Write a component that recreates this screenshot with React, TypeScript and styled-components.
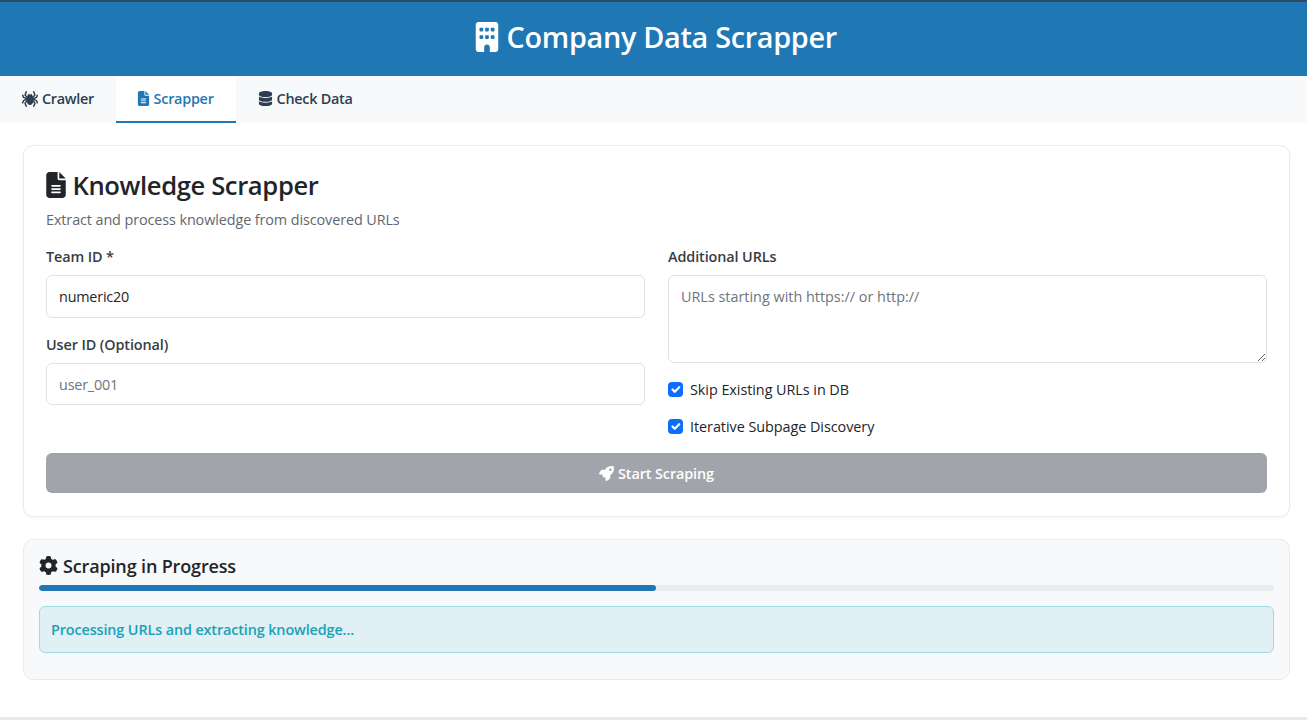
import styled, { createGlobalStyle } from "styled-components";
import { FaBuilding, FaDatabase, FaFileLines, FaGear, FaRocket, FaSpider } from "react-icons/fa6";

const GlobalStyle = createGlobalStyle`
     html, body {
          margin: 0;
          padding: 0;
          background: #fff;
     }
     body {
          font-family: "Open Sans", "Noto Sans", sans-serif;
          color: #212529;
          font-size: 14.4px;
     }
     * {
          box-sizing: border-box;
     }
`;

const Page = styled.div`
     height: 720px;
     overflow: hidden;
     display: flex;
     flex-direction: column;
`;
// fa6 glyphs sit in a square box, $inset trims the empty sides so gaps start at the drawing
const Glyph = styled.span<{ $size: number; $inset?: number }>`
     display: inline-flex;
     flex: none;
     margin: 0 ${(p) => -(p.$inset ?? 0)}px;
     svg {
          width: ${(p) => p.$size}px;
          height: ${(p) => p.$size}px;
     }
`;
const Header = styled.header`
     height: 76px;
     flex: none;
     padding: 0 0 5px 6px;
     background: #1f77b4;
     border-top: 2px solid #31495c;
     display: flex;
     align-items: center;
     justify-content: center;
     gap: 8px;
     color: #fff;
`;
const HeaderTitle = styled.h1`
     margin: 0;
     font-size: 28.8px;
     font-weight: 600;
     letter-spacing: -0.3px;
`;
const TabBar = styled.nav`
     height: 47px;
     flex: none;
     display: flex;
     background: #f8f9fa;
`;
const Tab = styled.div<{ $active?: boolean; $width: number }>`
     width: ${(p) => p.$width}px;
     display: flex;
     align-items: center;
     justify-content: center;
     gap: 4px;
     font-size: 14.4px;
     font-weight: 600;
     letter-spacing: -0.25px;
     color: ${(p) => (p.$active ? "#1f77b4" : "#2c3e50")};
     background: ${(p) => (p.$active ? "#fff" : "transparent")};
     border-bottom: 2px solid ${(p) => (p.$active ? "#1f77b4" : "transparent")};
`;
const Content = styled.main`
     flex: 1;
     padding: 22px 17px 0 23px;
     display: flex;
     flex-direction: column;
     gap: 22px;
`;
const Card = styled.section`
     height: 372px;
     flex: none;
     padding: 22px 22px 0;
     background: #fff;
     border: 1px solid #e9ecef;
     border-radius: 10px;
     box-shadow: 0 1px 3px rgba(0, 0, 0, 0.05);
`;
const CardTitle = styled.h2`
     margin: 0;
     height: 34px;
     display: flex;
     align-items: center;
     gap: 7px;
     font-size: 25.6px;
     font-weight: 600;
     letter-spacing: -0.38px;
     color: #212529;
`;
const CardSubtitle = styled.p`
     margin: 8px 0 0;
     height: 20px;
     line-height: 20px;
     font-size: 14.4px;
     color: #5f6770;
     letter-spacing: -0.1px;
`;
const FormGrid = styled.div`
     margin-top: 17px;
     display: grid;
     grid-template-columns: 1fr 1fr;
     column-gap: 23px;
`;
const Column = styled.div`
     display: flex;
     flex-direction: column;
`;
const Label = styled.label`
     height: 20px;
     line-height: 20px;
     margin-bottom: 8px;
     font-size: 14.4px;
     font-weight: 600;
     color: #373d43;
     letter-spacing: -0.1px;
`;
const Input = styled.input<{ $height: number; $spaced?: boolean }>`
     height: ${(p) => p.$height}px;
     padding: 0 12px;
     margin-bottom: ${(p) => (p.$spaced ? "17px" : "0")};
     font: inherit;
     letter-spacing: -0.2px;
     color: #212529;
     background: #fff;
     border: 1px solid #dee2e6;
     border-radius: 6px;
     outline: none;
     &::placeholder {
          color: #6c757d;
          opacity: 1;
     }
`;
const TextArea = styled.textarea`
     height: 88px;
     padding: 11px 12px;
     font: inherit;
     background: #fff;
     border: 1px solid #dee2e6;
     border-radius: 6px;
     outline: none;
     resize: vertical;
     &::placeholder {
          color: #6c757d;
          opacity: 1;
     }
`;
const CheckRow = styled.label<{ $top: number }>`
     margin-top: ${(p) => p.$top}px;
     height: 20px;
     display: flex;
     align-items: center;
     gap: 7px;
     font-size: 14.4px;
     color: #212529;
     letter-spacing: -0.05px;
`;
const CheckBox = styled.input`
     width: 15px;
     height: 15px;
     margin: 0;
     appearance: none;
     border-radius: 4px;
     background-color: #0d6efd;
     background-image: url("data:image/svg+xml,%3csvg xmlns='http://www.w3.org/2000/svg' viewBox='0 0 20 20'%3e%3cpath fill='none' stroke='%23fff' stroke-linecap='round' stroke-linejoin='round' stroke-width='3' d='m6 10 3 3 6-6'/%3e%3c/svg%3e");
     background-size: 100% 100%;
`;
const SubmitButton = styled.button`
     margin-top: 17px;
     width: 100%;
     height: 40px;
     display: flex;
     align-items: center;
     justify-content: center;
     gap: 4px;
     border: none;
     border-radius: 6px;
     background: #a1a5ab;
     color: #fff;
     font: inherit;
     font-weight: 600;
     letter-spacing: -0.1px;
`;
const ProgressCard = styled.section`
     height: 141px;
     flex: none;
     padding: 13px 15px 0;
     background: #f8f9fa;
     border: 1px solid #e9ecef;
     border-radius: 10px;
`;
const ProgressTitle = styled.h3`
     margin: 0;
     height: 25px;
     display: flex;
     align-items: center;
     gap: 5px;
     font-size: 18px;
     font-weight: 600;
     letter-spacing: -0.15px;
     color: #212529;
`;
const ProgressTrack = styled.div`
     margin-top: 7px;
     height: 6px;
     background: #e9ecef;
     border-radius: 3px;
     overflow: hidden;
`;
const ProgressFill = styled.div`
     height: 100%;
     background: #1f77b4;
     border-radius: 3px;
`;
const InfoAlert = styled.div`
     margin-top: 15px;
     height: 47px;
     padding: 0 11px;
     display: flex;
     align-items: center;
     background: #e0f0f4;
     border: 1px solid #9edbe6;
     border-radius: 6px;
     color: #17a2b8;
     font-weight: 600;
     letter-spacing: -0.12px;
`;
const BottomStrip = styled.div`
     height: 3px;
     flex: none;
     background: #e9e9e9;
`;

export default function App() {
     const progress = 49.95;

     return (
          <>
               <GlobalStyle />
               <Page>
                    <Header>
                         <Glyph $size={30} $inset={3.75}>
                              <FaBuilding />
                         </Glyph>
                         <HeaderTitle>Company Data Scrapper</HeaderTitle>
                    </Header>
                    <TabBar>
                         <Tab $width={116}>
                              <Glyph $size={16}>
                                   <FaSpider />
                              </Glyph>
                              Crawler
                         </Tab>
                         <Tab $width={120} $active>
                              <Glyph $size={15} $inset={1.9}>
                                   <FaFileLines />
                              </Glyph>
                              Scrapper
                         </Tab>
                         <Tab $width={140}>
                              <Glyph $size={15} $inset={0.9}>
                                   <FaDatabase />
                              </Glyph>
                              Check Data
                         </Tab>
                    </TabBar>
                    <Content>
                         <Card>
                              <CardTitle>
                                   <Glyph $size={26} $inset={3.25}>
                                        <FaFileLines />
                                   </Glyph>
                                   Knowledge Scrapper
                              </CardTitle>
                              <CardSubtitle>Extract and process knowledge from discovered URLs</CardSubtitle>
                              <FormGrid>
                                   <Column>
                                        <Label>Team ID *</Label>
                                        <Input $height={43} $spaced defaultValue="numeric20" />
                                        <Label>User ID (Optional)</Label>
                                        <Input $height={42} placeholder="user_001" />
                                   </Column>
                                   <Column>
                                        <Label>Additional URLs</Label>
                                        <TextArea placeholder="URLs starting with https:// or http://" />
                                        <CheckRow $top={16}>
                                             <CheckBox type="checkbox" defaultChecked />
                                             Skip Existing URLs in DB
                                        </CheckRow>
                                        <CheckRow $top={17}>
                                             <CheckBox type="checkbox" defaultChecked />
                                             Iterative Subpage Discovery
                                        </CheckRow>
                                   </Column>
                              </FormGrid>
                              <SubmitButton type="button">
                                   <Glyph $size={15}>
                                        <FaRocket />
                                   </Glyph>
                                   Start Scraping
                              </SubmitButton>
                         </Card>
                         <ProgressCard>
                              <ProgressTitle>
                                   <Glyph $size={19}>
                                        <FaGear />
                                   </Glyph>
                                   Scraping in Progress
                              </ProgressTitle>
                              <ProgressTrack>
                                   <ProgressFill style={{ width: `${progress}%` }} />
                              </ProgressTrack>
                              <InfoAlert>Processing URLs and extracting knowledge...</InfoAlert>
                         </ProgressCard>
                    </Content>
                    <BottomStrip />
               </Page>
          </>
     );
}
